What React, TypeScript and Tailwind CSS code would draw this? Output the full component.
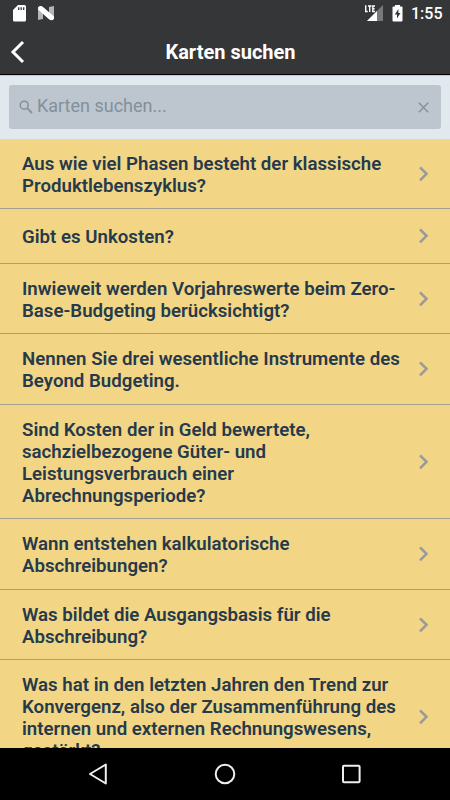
const rows = [
  { h: 'h-[70px]', lines: ['Aus wie viel Phasen besteht der klassische', 'Produktlebenszyklus?'] },
  { h: 'h-[55px]', lines: ['Gibt es Unkosten?'] },
  { h: 'h-[70px]', lines: ['Inwieweit werden Vorjahreswerte beim Zero-', 'Base-Budgeting berücksichtigt?'] },
  { h: 'h-[71px]', lines: ['Nennen Sie drei wesentliche Instrumente des', 'Beyond Budgeting.'] },
  { h: 'h-[114px]', lines: ['Sind Kosten der in Geld bewertete,', 'sachzielbezogene Güter- und', 'Leistungsverbrauch einer', 'Abrechnungsperiode?'] },
  { h: 'h-[71px]', lines: ['Wann entstehen kalkulatorische', 'Abschreibungen?'] },
  { h: 'h-[70px]', lines: ['Was bildet die Ausgangsbasis für die', 'Abschreibung?'] },
  { h: 'h-[115px]', lines: ['Was hat in den letzten Jahren den Trend zur', 'Konvergenz, also der Zusammenführung des', 'internen und externen Rechnungswesens,', 'gestärkt?'] },
];

function StatusBar() {
  return (
    <div className="flex h-[27px] shrink-0 items-start">
      <svg className="ml-3 mt-[5px]" width="15" height="17" viewBox="0 0 15 17">
        <path d="M6 0H12.5Q14 0 14 1.5V15Q14 16.5 12.5 16.5H2.5Q1 16.5 1 15V5Z" fill="#fff" />
        <path d="M6.7 2.2V5M9.2 2.2V5M11.7 2.2V5" stroke="#353638" strokeWidth="1.3" />
      </svg>
      <svg className="ml-[11px] mt-[6px]" width="17" height="15" viewBox="0 0 17 15">
        <path d="M0 1L5 4V13L0 14Z M11 1L16 0V13L11 10Z" fill="#b4b5b6" />
        <path d="M0 1.5Q2.5 -1.5 5 1L16 10.5V13Q13.5 15.5 11 13.3L0 3.5Z" fill="#fff" />
      </svg>
      <div className="grow" />
      <svg className="mt-[5px]" width="20" height="17" viewBox="0 0 20 17">
        <path d="M19 0V16H3Z" fill="#78797b" />
        <path d="M13 6V16H3Z" fill="#fff" />
        <path d="M0 0H11V7.5H0Z" fill="#353638" />
        <path d="M1.7 .3V6.5H3.7M4 1H7.5M5.7 1V7M11 1H8.8V6.5H11M8.8 3.7H10.6" fill="none" stroke="#fff" strokeWidth="1.4" />
      </svg>
      <svg className="ml-2 mt-[5px]" width="11" height="17" viewBox="0 0 11 17">
        <path d="M3 0H8V1.5H10Q10.5 1.5 10.5 2.5V15.5Q10.5 16.5 9.5 16.5H1.5Q.5 16.5 .5 15.5V2.5Q.5 1.5 1.5 1.5H3Z" fill="#fff" />
        <path d="M6.4 4L2.8 9.5H5V13.5L8.5 8H6.4Z" fill="#353638" />
      </svg>
      <span className="ml-2 mr-2 mt-[4px] w-[31px] whitespace-nowrap text-[16px] font-medium leading-5 text-white">1:55</span>
    </div>
  );
}

export default function App() {
  return (
    <div className="flex h-[800px] w-[450px] flex-col overflow-hidden bg-[#353638] font-[Roboto,sans-serif]">
      <StatusBar />
      <header className="flex h-12 shrink-0 items-center border-b border-black">
        <svg className="ml-[10px] mt-[2px]" width="16" height="24" viewBox="0 0 16 24">
          <path d="M13 2L3 12L13 22" fill="none" stroke="#fff" strokeWidth="3" />
        </svg>
        <h1 className="mr-[15px] mt-[3px] grow text-center text-[20px] font-bold leading-6 text-white">Karten suchen</h1>
      </header>
      <div className="h-16 shrink-0 border-t border-[#c5c9ce] bg-[#e1e8ee] px-[9px] pt-[9px]">
        <div className="flex h-11 items-center rounded-[3px] bg-[#bdc6cf] text-[#82909b]">
          <svg className="ml-[10px]" width="14" height="14" viewBox="0 0 14 14" fill="none" stroke="currentColor" strokeWidth="1.5">
            <circle cx="5.2" cy="5.2" r="4" />
            <path d="M8.2 8.2L13 13" strokeWidth="1.8" />
          </svg>
          <span className="mb-[2px] ml-1 grow text-[18px] leading-6">Karten suchen...</span>
          <svg className="mr-3 mt-px" width="11" height="11" viewBox="0 0 11 11">
            <path d="M.8 .8L10.2 10.2M10.2 .8L.8 10.2" stroke="currentColor" strokeWidth="1.4" />
          </svg>
        </div>
      </div>
      <main className="min-h-0 grow overflow-hidden bg-[#f2d686]">
        {rows.map((row) => (
          <div key={row.lines[0]} className={`flex items-center border-b border-[#a39e94] ${row.h}`}>
            <p className="grow whitespace-nowrap pl-[22px] pt-[2px] text-[18.66px] font-semibold leading-[22px] text-[#263a4b]">
              {row.lines.map((line) => (
                <span key={line} className="block">{line}</span>
              ))}
            </p>
            <svg className="mr-[20px]" width="12" height="16" viewBox="0 0 12 16">
              <path d="M2 1.3L8.5 7.8L2 14.3" fill="none" stroke="#9a9a9c" strokeWidth="2.6" />
            </svg>
          </div>
        ))}
      </main>
      <nav className="flex h-[52px] shrink-0 items-center bg-black">
        <svg className="ml-[88px]" width="20" height="22" viewBox="0 0 20 22">
          <path d="M17.8 1.5V20.5L2 11Z" fill="none" stroke="#eee" strokeWidth="2" strokeLinejoin="round" />
        </svg>
        <svg className="ml-[106px]" width="22" height="22" viewBox="0 0 22 22">
          <circle cx="11" cy="11" r="9.3" fill="none" stroke="#eee" strokeWidth="2" />
        </svg>
        <svg className="ml-[105px]" width="21" height="20" viewBox="0 0 21 20">
          <rect x="2" y="1.7" width="16.6" height="16.6" rx="1" fill="none" stroke="#eee" strokeWidth="2" />
        </svg>
      </nav>
    </div>
  );
}
